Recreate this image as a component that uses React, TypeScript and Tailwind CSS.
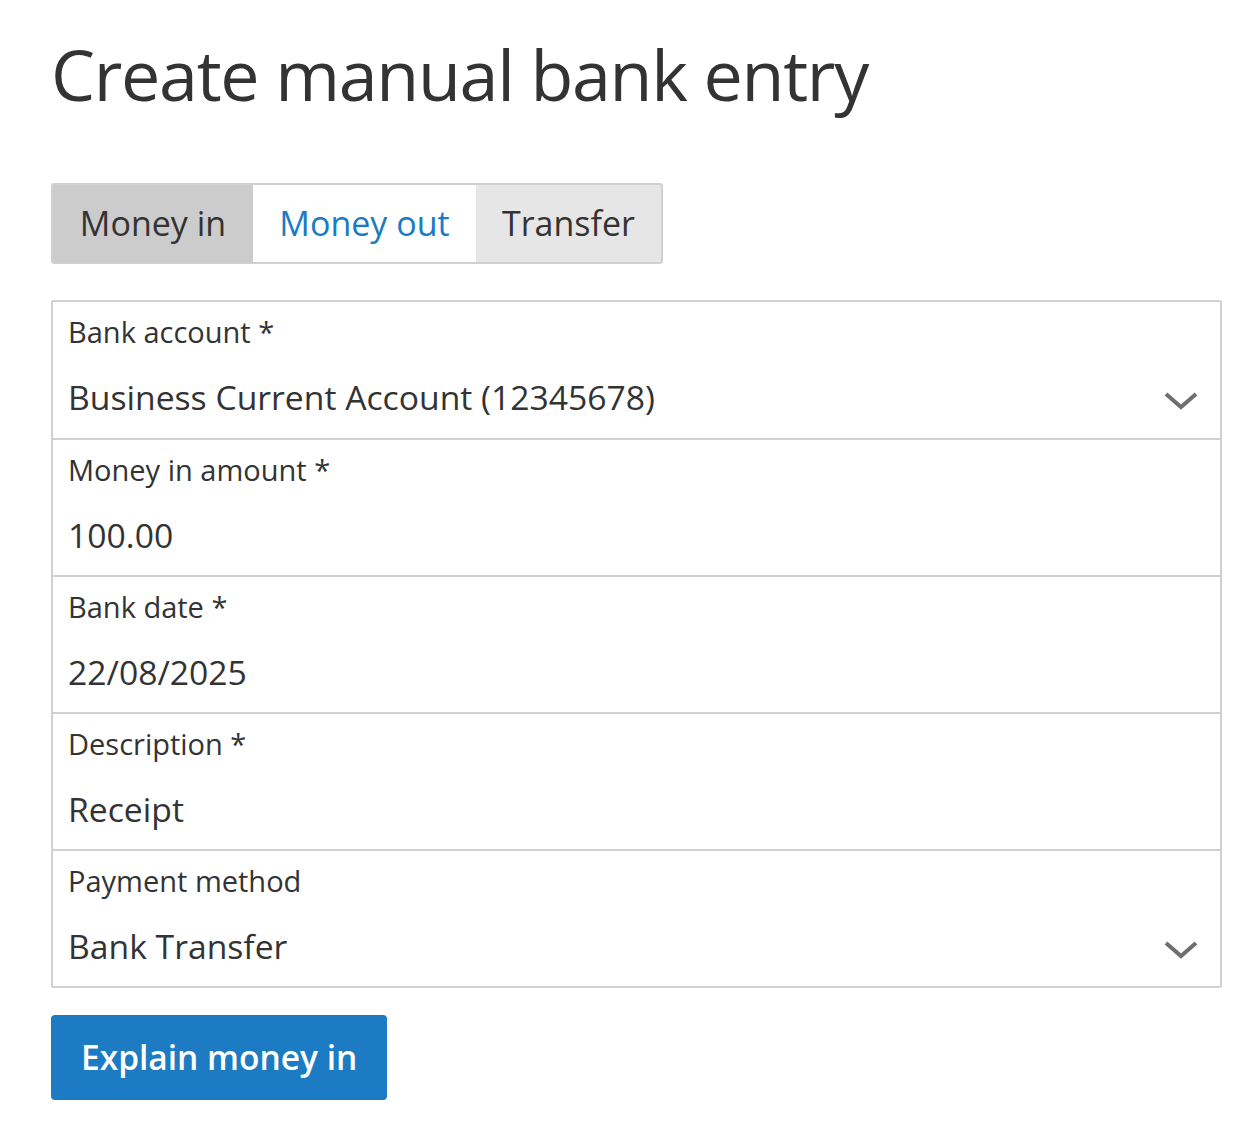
import React from 'react';

const Chevron: React.FC = () => (
  <svg width="34" height="20" viewBox="0 0 34 20" className="mt-[7px] shrink-0">
    <path d="M2 3 L17 16 L32 3" fill="none" stroke="#6f6f6f" strokeWidth="4" />
  </svg>
);

type Field = { label: string; value: string; select?: boolean };

const fields: Field[] = [
  { label: 'Bank account *', value: 'Business Current Account (12345678)', select: true },
  { label: 'Money in amount *', value: '100.00' },
  { label: 'Bank date *', value: '22/08/2025' },
  { label: 'Description *', value: 'Receipt' },
  { label: 'Payment method', value: 'Bank Transfer', select: true },
];

export default function App() {
  return (
    <div className="min-h-[1140px] bg-white pl-[51px] pr-[35px] pt-[32px] text-[#333]" style={{ fontFamily: '"Open Sans", sans-serif' }}>
      <h1 className="text-[70px] leading-[84px] font-normal tracking-[-1.3px]">Create manual bank entry</h1>

      <div className="mt-[67px] inline-flex h-[81px] overflow-hidden rounded-[3px] border-2 border-[#d0d0d0] text-[34px]">
        <div className="flex w-[200px] items-center justify-center bg-[#cccccc]">Money in</div>
        <div className="flex w-[223px] items-center justify-center bg-white text-[#1b7bc2]">Money out</div>
        <div className="flex w-[185px] items-center justify-center bg-[#e6e6e6]">Transfer</div>
      </div>

      <div className="mt-[36px] border-2 border-[#d0d0d0] rounded-[2px]">
        {fields.map((f, i) => (
          <div
            key={f.label}
            className={`${i > 0 ? 'h-[137px] border-t-2 border-[#d0d0d0]' : 'h-[136px]'} px-[15px] pt-[11px]`}
          >
            <div className="text-[29px] leading-[38px]">{f.label}</div>
            <div className="mt-[16px] flex items-center justify-between pr-[7px]">
              <span className="text-[33.7px] leading-[60px]">{f.value}</span>
              {f.select && <Chevron />}
            </div>
          </div>
        ))}
      </div>

      <button className="mt-[27px] h-[85px] rounded-[4px] bg-[#1c7bc2] px-[30px] text-[33.5px] font-semibold text-white">
        Explain money in
      </button>
    </div>
  );
}
